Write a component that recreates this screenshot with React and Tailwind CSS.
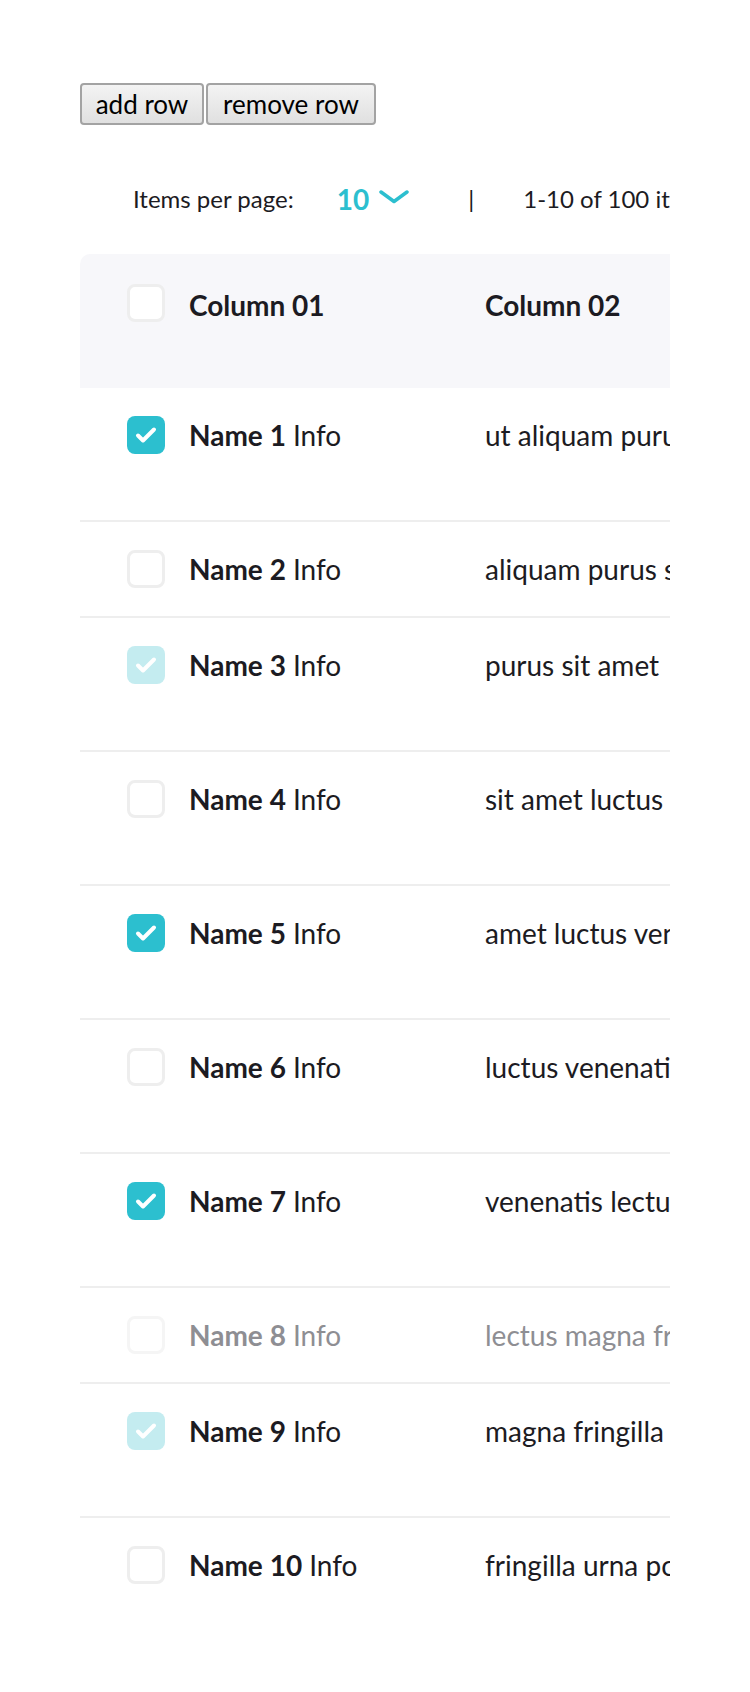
import React from 'react';
import { useState } from 'react';

const words = "ut aliquam purus sit amet luctus venenatis lectus magna fringilla urna porttitor".split(" ");

const initialRows = [
    { id: 1, checked: true, tall: true },
    { id: 2, checked: false, tall: false },
    { id: 3, checked: true, light: true, tall: true },
    { id: 4, checked: false, tall: true },
    { id: 5, checked: true, tall: true },
    { id: 6, checked: false, tall: true },
    { id: 7, checked: true, tall: true },
    { id: 8, checked: false, disabled: true, tall: false },
    { id: 9, checked: true, light: true, tall: true },
    { id: 10, checked: false, tall: true },
].map((r, i) => ({ ...r, text: words.slice(i, i + 3).join(" ") }));

const Checkbox = ({ checked, light, disabled, onClick }) => {
    if (checked) {
        return (
            <button
                onClick={onClick}
                className={`w-[38px] h-[38px] rounded-[8px] shrink-0 flex items-center justify-center ${light ? "bg-[#c4ecf0]" : "bg-[#2cbfcf]"}`}
            >
                <svg width="38" height="38" viewBox="0 0 38 38" fill="none">
                    <path d="M11 19.5 L16 24.5 L27 13.5" stroke="white" strokeWidth="4" strokeLinecap="round" strokeLinejoin="round" />
                </svg>
            </button>
        );
    }
    return (
        <button
            onClick={onClick}
            className={`w-[38px] h-[38px] rounded-[8px] shrink-0 bg-white border-[3px] ${disabled ? "border-[#f5f5f5]" : "border-[#eeeeee]"}`}
        />
    );
};

const App = () => {
    const [rows, setRows] = useState(initialRows);

    const toggle = (id) => {
        setRows(rows.map((r) => (r.id === id && !r.disabled ? { ...r, checked: !r.checked } : r)));
    };

    return (
        <div className="min-h-screen bg-white px-20 pt-[83px] font-['Lato','Liberation_Sans',sans-serif] text-[#1c1b22]">
            <div className="flex gap-[2px]">
                <button className="w-[124px] h-[42px] rounded-[4px] border-2 border-[#a3a3a3] bg-gradient-to-b from-[#f3f3f3] to-[#e0e0e0] text-[26px] text-black leading-none">
                    add row
                </button>
                <button className="w-[170px] h-[42px] rounded-[4px] border-2 border-[#a3a3a3] bg-gradient-to-b from-[#f3f3f3] to-[#e0e0e0] text-[26px] text-black leading-none">
                    remove row
                </button>
            </div>

            {/* pagination */}
            <div className="mt-[50px] h-[48px] w-[590px] overflow-hidden flex items-center whitespace-nowrap">
                <span className="shrink-0 ml-[53px] text-[24px]">Items per page:</span>
                <span className="shrink-0 ml-[43px] text-[28px] font-bold text-[#2cbfcf]">10</span>
                <svg className="shrink-0 ml-[10px] mt-[-4px]" width="30" height="14" viewBox="0 0 30 14" fill="none">
                    <path d="M2 2 L15 11.5 L28 2" stroke="#2cbfcf" strokeWidth="3.5" strokeLinecap="round" strokeLinejoin="round" />
                </svg>
                <span className="shrink-0 ml-[59px] text-[24px]">|</span>
                <span className="shrink-0 ml-[49px] text-[24px]">1-10 of 100 items</span>
            </div>

            {/* table */}
            <div className="mt-[31px] w-[590px] overflow-hidden rounded-tl-[10px]">
                <div className="w-[1100px]">
                    <div className="h-[134px] bg-[#f7f7fa] flex items-start pt-[30px] text-[28px] font-bold">
                        <div className="pl-[47px] w-[109px] flex items-center">
                            <Checkbox checked={false} />
                        </div>
                        <div className="w-[296px] h-[38px] mt-[2px] flex items-center">Column 01</div>
                        <div className="w-[300px] h-[38px] mt-[2px] flex items-center">Column 02</div>
                        <div className="w-[300px] h-[38px] mt-[2px] flex items-center">Column 03</div>
                    </div>
                    {rows.map((r, i) => (
                        <div
                            key={r.id}
                            className={`flex items-start pt-[28px] text-[28px] ${i > 0 ? "border-t-2 border-[#eeeeee]" : ""} ${r.tall ? (i > 0 ? "h-[134px]" : "h-[132px]") : "h-[96px]"} ${r.disabled ? "text-[#8e8e93]" : ""}`}
                        >
                            <div className="pl-[47px] w-[109px] flex items-center">
                                <Checkbox checked={r.checked} light={r.light} disabled={r.disabled} onClick={() => toggle(r.id)} />
                            </div>
                            <div className="w-[296px] h-[38px] flex items-center whitespace-nowrap">
                                <span className="font-bold">Name {r.id}</span>
                                <span className="ml-[7px]">Info</span>
                            </div>
                            <div className="w-[300px] h-[38px] flex items-center whitespace-nowrap">{r.text}</div>
                            <div className="w-[300px] h-[38px] flex items-center whitespace-nowrap">Info {r.id}</div>
                        </div>
                    ))}
                </div>
            </div>
        </div>
    );
};

export default App;
